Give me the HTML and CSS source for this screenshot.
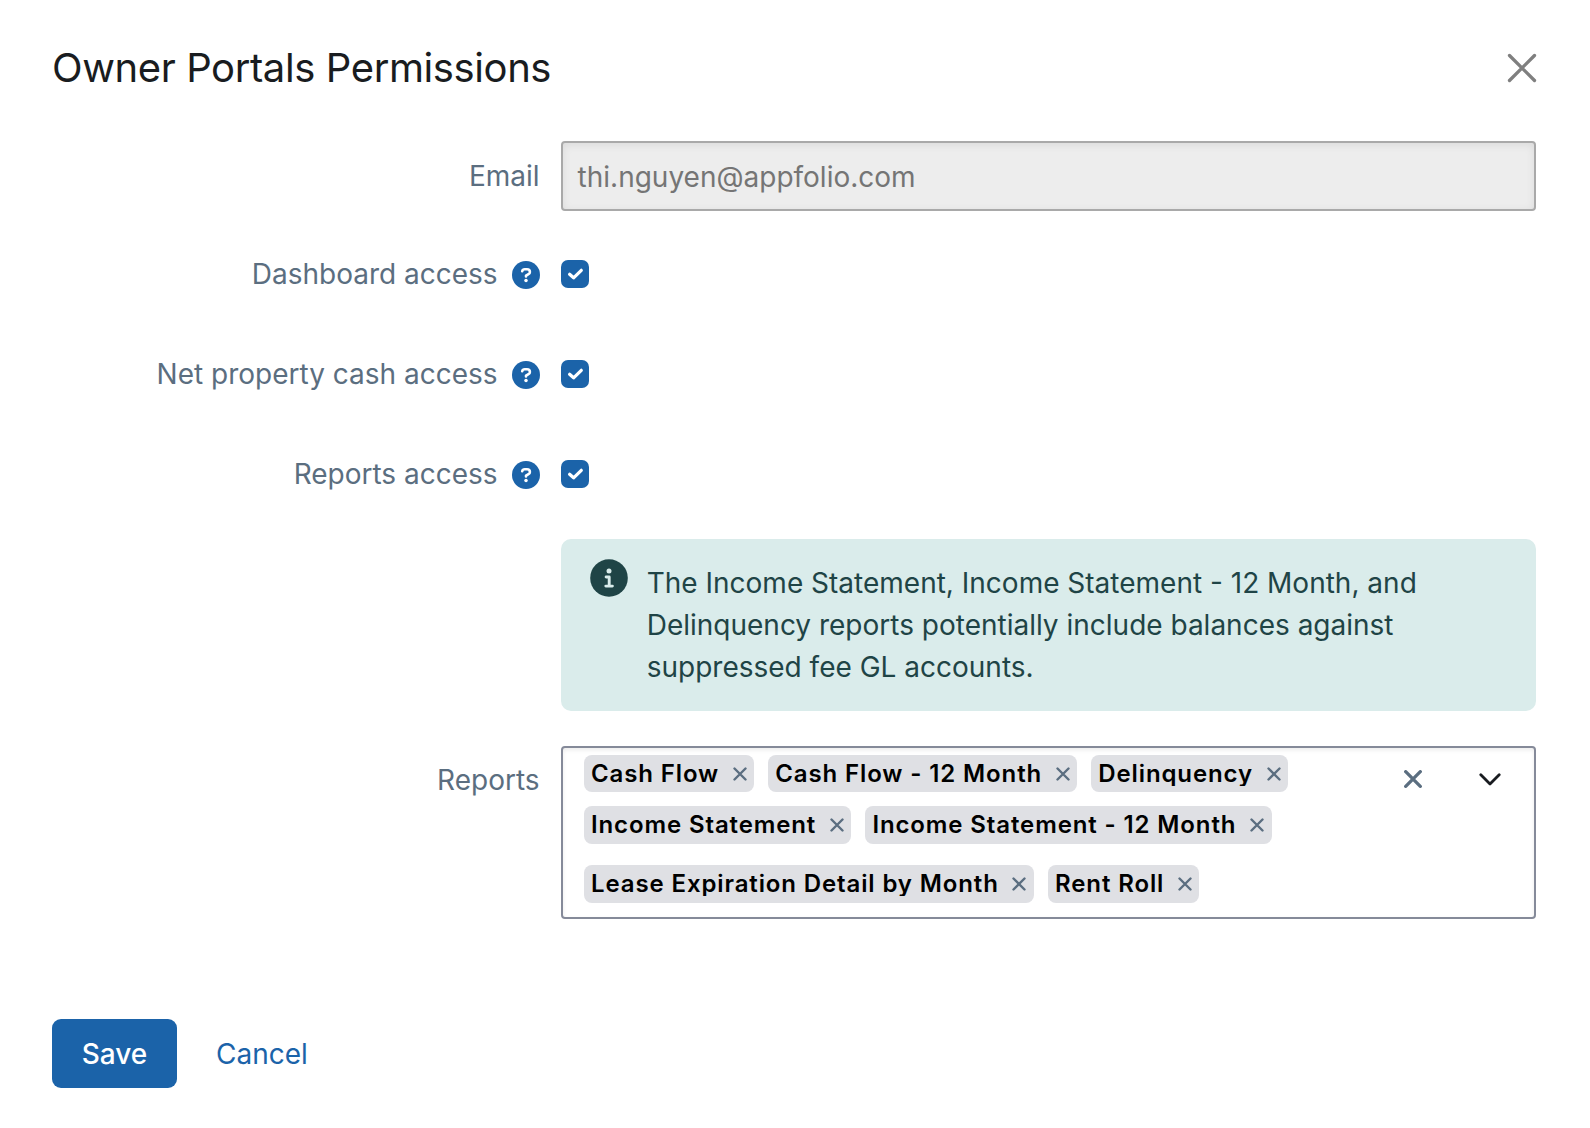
FILE: index.html
```html
<!DOCTYPE html>
<html lang="en">
<head>
<meta charset="utf-8">
<title>Owner Portals Permissions</title>
<link rel="stylesheet" href="styles.css">
</head>
<body>
<svg class="sprite" aria-hidden="true">
  <symbol id="cross" viewBox="0 0 14 14"><path d="M1.5 1.5 12.5 12.5M12.5 1.5 1.5 12.5"/></symbol>
  <symbol id="help" viewBox="0 0 28 28"><circle cx="14" cy="14" r="14" fill="#1b63a9"/><path d="M10.2 10.2C10.5 9 11.4 8.3 12.7 8.3H15C16.7 8.3 17.9 9.4 17.9 10.9C17.9 12 17.4 12.7 16.5 13.2L14 14.7V15.5" fill="none" stroke="#fff" stroke-width="2.6" stroke-linecap="round" stroke-linejoin="round"/><circle cx="14" cy="19.4" r="1.75" fill="#fff"/></symbol>
  <symbol id="check" viewBox="0 0 28 28"><path d="M8.6 14.2 12.6 17.8 20.3 10.3" fill="none" stroke="#fff" stroke-width="3.2" stroke-linecap="round" stroke-linejoin="round"/></symbol>
</svg>
<main class="dialog">
  <header class="dialog-header">
    <h1 class="title">Owner Portals Permissions</h1>
    <button class="close" aria-label="Close"><svg width="30" height="30" viewBox="0 0 30 30"><path d="M2.5 2.5 27.5 27.5M27.5 2.5 2.5 27.5"/></svg></button>
  </header>
  <form class="form">
    <div class="row row-email">
      <span class="label">Email</span>
      <div class="input">thi.nguyen@appfolio.com</div>
    </div>
    <div class="row row-check">
      <span class="label">Dashboard access<svg class="help"><use href="#help"/></svg></span>
      <span class="checkbox"><svg width="28" height="28"><use href="#check"/></svg></span>
    </div>
    <div class="row row-check">
      <span class="label">Net property cash access<svg class="help"><use href="#help"/></svg></span>
      <span class="checkbox"><svg width="28" height="28"><use href="#check"/></svg></span>
    </div>
    <div class="row row-check">
      <span class="label">Reports access<svg class="help"><use href="#help"/></svg></span>
      <span class="checkbox"><svg width="28" height="28"><use href="#check"/></svg></span>
    </div>
    <div class="alert">
      <svg class="info" viewBox="0 0 38 38"><circle cx="19" cy="19" r="18.8" fill="#1f4446"/><circle cx="19" cy="12.1" r="2.5" fill="#daeceb"/><path d="M16.1 18H19.2V27.1M15.8 27.1H22.4" fill="none" stroke="#daeceb" stroke-width="2.9" stroke-linecap="round" stroke-linejoin="round"/></svg>
      <p class="alert-text">The Income Statement, Income Statement - 12 Month, and Delinquency reports potentially include balances against suppressed fee GL accounts.</p>
    </div>
    <div class="row row-reports">
      <span class="label">Reports</span>
      <div class="select">
        <div class="chips">
          <div class="chip-line chip-line-first">
            <span class="chip"><span class="chip-text">Cash Flow</span><svg class="remove"><use href="#cross"/></svg></span>
            <span class="chip"><span class="chip-text">Cash Flow - 12 Month</span><svg class="remove"><use href="#cross"/></svg></span>
            <span class="chip"><span class="chip-text">Delinquency</span><svg class="remove"><use href="#cross"/></svg></span>
          </div>
          <div class="chip-line">
            <span class="chip"><span class="chip-text">Income Statement</span><svg class="remove"><use href="#cross"/></svg></span>
            <span class="chip"><span class="chip-text">Income Statement - 12 Month</span><svg class="remove"><use href="#cross"/></svg></span>
          </div>
          <div class="chip-line chip-line-last">
            <span class="chip"><span class="chip-text">Lease Expiration Detail by Month</span><svg class="remove"><use href="#cross"/></svg></span>
            <span class="chip"><span class="chip-text">Rent Roll</span><svg class="remove"><use href="#cross"/></svg></span>
          </div>
        </div>
        <div class="controls">
          <svg class="clear" width="18" height="18" viewBox="0 0 18 18"><path d="M1.7 1.7 16.3 16.3M16.3 1.7 1.7 16.3"/></svg>
          <svg class="chevron" width="22" height="13" viewBox="0 0 22 13"><path d="M1.8 1.8 11 11 20.2 1.8"/></svg>
        </div>
      </div>
    </div>
  </form>
  <footer class="actions">
    <button class="save">Save</button>
    <a class="cancel">Cancel</a>
  </footer>
</main>
</body>
</html>
```
FILE: styles.css
```css
* { box-sizing: border-box; }
body { margin: 0; background: #fff; font-family: Inter, "Liberation Sans", sans-serif; font-size: 28px; line-height: 42px; color: #5b6e80; }
.sprite { display: none; }
svg { display: block; flex: none; }
button { font: inherit; border: 0; padding: 0; background: none; }
.dialog { height: 1128px; padding: 38px 54px 0 52px; overflow: hidden; }
.dialog-header { display: flex; justify-content: space-between; align-items: center; height: 60px; }
.title { margin: 0; font-size: 40px; font-weight: 400; line-height: 60px; letter-spacing: -0.4px; color: #191c20; }
.close { stroke: #7f7f7f; stroke-width: 3.3; stroke-linecap: round; fill: none; margin-right: -1px; }
.form { padding-top: 43px; }
.row { display: grid; grid-template-columns: 488px 975px; column-gap: 21px; }
.label { display: flex; justify-content: flex-end; align-items: center; padding-right: 0.4px; white-space: nowrap; }
.help { width: 28px; height: 28px; margin: 2.6px 0 0 14px; }
.row-email { height: 70px; }
.row-email .label { height: 70px; padding-bottom: 1px; }
.input { height: 70px; border: 2px solid #a9a9a9; border-radius: 4px; background: #ededed; box-shadow: inset 0 2px 8px rgba(0,0,0,.08); padding: 13px 15px 11px 14.6px; color: #757575; white-space: nowrap; }
.row-check { height: 42px; margin-bottom: 58px; align-items: center; }
.row-email + .row-check { margin-top: 42px; }
.checkbox { width: 28px; height: 28px; border-radius: 7px; background: #1b63a9; }
.alert { display: flex; width: 975px; height: 172px; margin: -14px 0 35px 509px; padding: 20px 29px; border-radius: 10px; background: #daeceb; color: #1f4446; }
.info { width: 38px; height: 38px; margin-right: 18.7px; }
.alert-text { margin: 3px 0 0; width: 800px; }
.row-reports { height: 173px; }
.row-reports .label { height: 42px; margin-top: 13px; }
.select { display: flex; justify-content: space-between; height: 173px; border: 2px solid #858a99; border-radius: 4px; box-shadow: inset 0 2px 4px rgba(0,0,0,.08); padding: 7px 33px 0 21px; }
.chip-line { display: flex; gap: 14px; margin-bottom: 21px; }
.chip-line-first { margin-bottom: 14px; }
.chip-line-first .chip { height: 37px; padding-bottom: 0; }
.chip-line-last { margin-bottom: 0; }
.chip { display: flex; align-items: center; height: 38px; padding: 0 7.6px 1px 7px; border-radius: 8px; background: #dfe0e4; color: #000; }
.chip-text { font-size: 24px; font-weight: 600; line-height: 25px; letter-spacing: 0.88px; white-space: nowrap; overflow: hidden; }
.remove { width: 14px; height: 14px; margin-left: 13.6px; fill: none; stroke: #5b6e80; stroke-width: 2.4; stroke-linecap: round; }
.controls { display: flex; align-items: flex-start; padding-top: 15.3px; gap: 57px; }
.clear { fill: none; stroke: #5b6e80; stroke-width: 3.3; stroke-linecap: round; }
.chevron { margin-top: 2.5px; fill: none; stroke: #191c20; stroke-width: 2.8; stroke-linecap: round; stroke-linejoin: round; }
.actions { display: flex; align-items: center; gap: 39px; margin-top: 100px; }
.save { width: 125px; height: 69px; border-radius: 9px; background: #1b63a9; color: #fff; font-weight: 500; }
.cancel { color: #1b63a9; }
```
